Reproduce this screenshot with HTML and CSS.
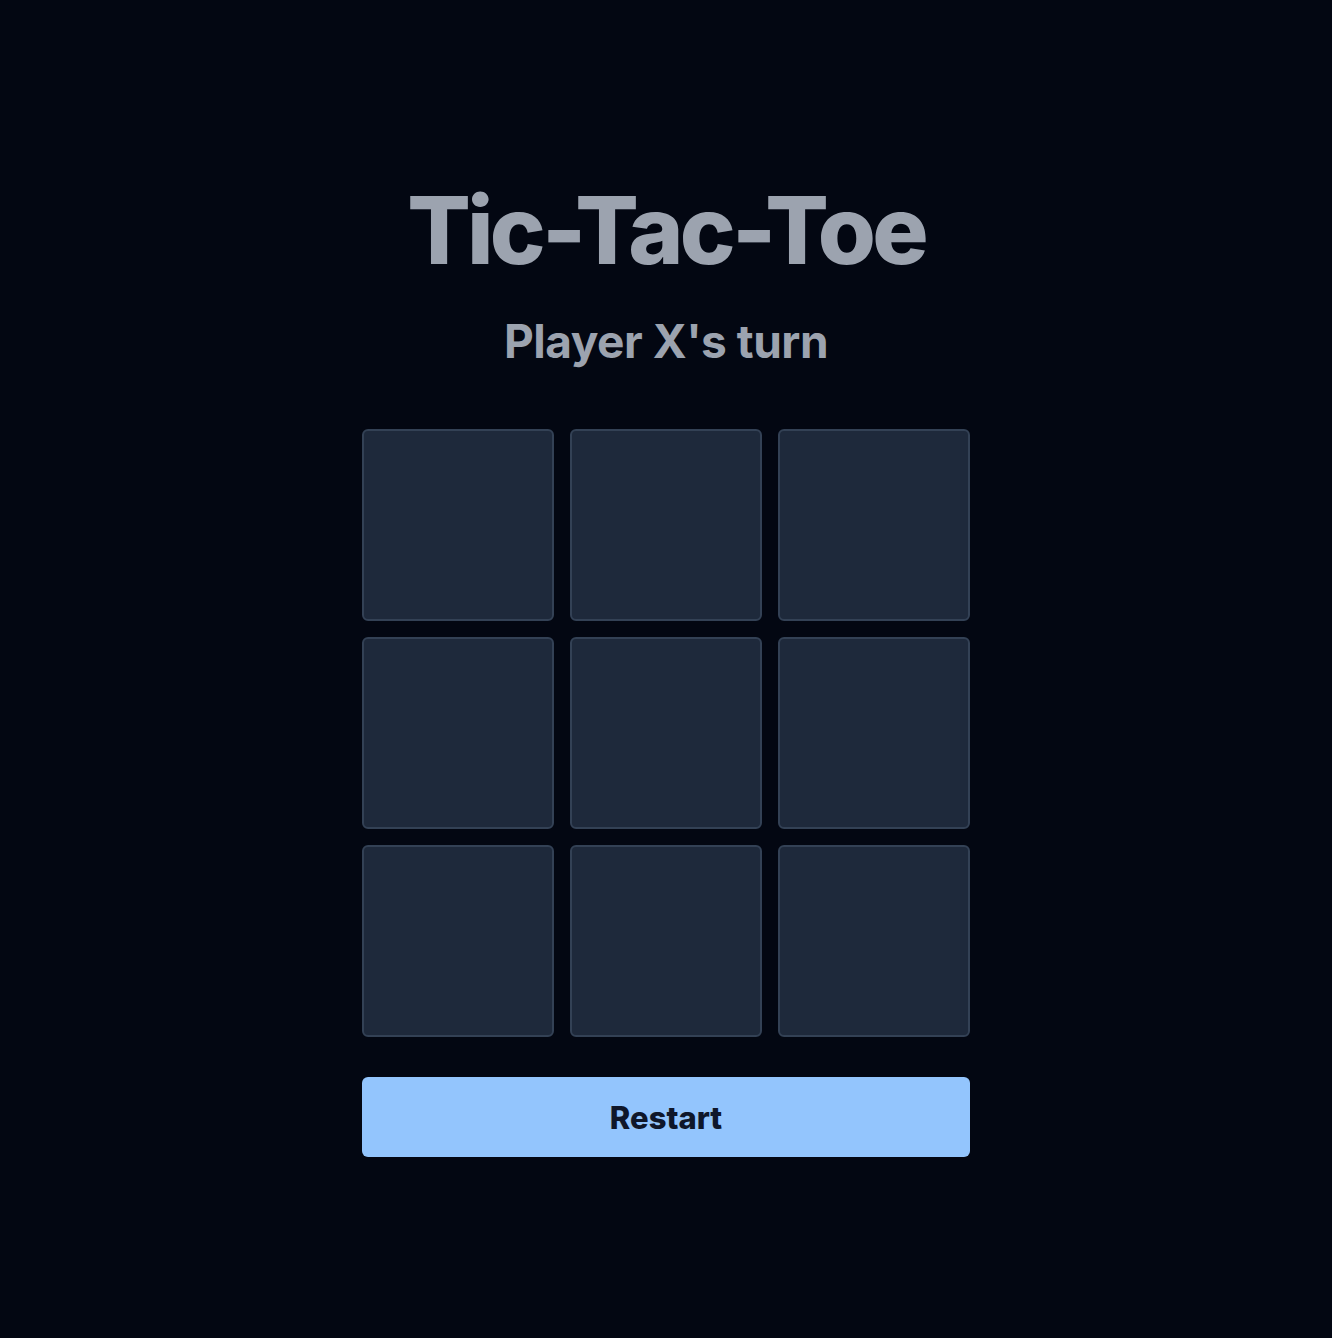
FILE: index.html
```html
<!DOCTYPE html>
<html lang="en">
<head>
<meta charset="utf-8">
<title>Tic-Tac-Toe</title>
<link rel="stylesheet" href="styles.css">
</head>
<body>
<main class="game">
  <h1 class="title">Tic-Tac-Toe</h1>
  <p class="status">Player X's turn</p>
  <div class="board">
    <button class="cell"></button>
    <button class="cell"></button>
    <button class="cell"></button>
    <button class="cell"></button>
    <button class="cell"></button>
    <button class="cell"></button>
    <button class="cell"></button>
    <button class="cell"></button>
    <button class="cell"></button>
  </div>
  <button class="restart">Restart</button>
</main>
</body>
</html>
```

FILE: styles.css
```css
* { box-sizing: border-box; }
html, body {
  margin: 0;
  padding: 0;
  background: #030712;
  height: 100%;
}
body {
  font-family: Inter, "Noto Sans", sans-serif;
  color: #9ca3af;
}
.game {
  display: flex;
  flex-direction: column;
  align-items: center;
  padding-top: 183px;
}
.title {
  margin: 0;
  font-size: 94px;
  line-height: 1;
  font-weight: 800;
  letter-spacing: -0.04em;
}
.status {
  margin: 41px 0 0;
  font-size: 46px;
  line-height: 1;
  font-weight: 700;
  letter-spacing: -0.01em;
}
.board {
  margin-top: 65px;
  display: grid;
  grid-template-columns: repeat(3, 192px);
  grid-auto-rows: 192px;
  gap: 16px;
}
.cell {
  background: #1e293b;
  border: 2px solid #334155;
  border-radius: 6px;
  padding: 0;
}
.restart {
  margin-top: 40px;
  width: 608px;
  height: 80px;
  background: #93c5fd;
  border: none;
  border-radius: 6px;
  color: #0f172a;
  font-family: Inter, "Noto Sans", sans-serif;
  font-size: 31px;
  font-weight: 800;
}
```
